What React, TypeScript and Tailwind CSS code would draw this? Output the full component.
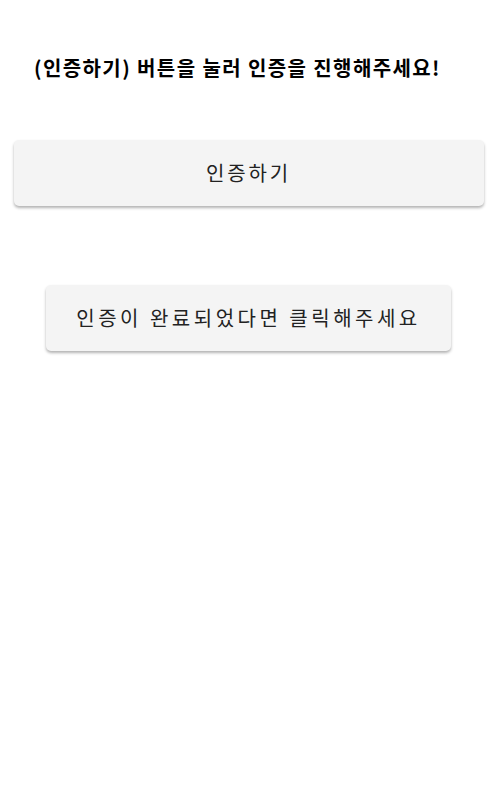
export default function App() {
  return (
    <div
      className="min-h-screen bg-white flex flex-col items-center"
      style={{ fontFamily: '"Noto Sans CJK KR", "Noto Sans", sans-serif' }}
    >
      <h1 className="self-start ml-[34px] mt-[54px] text-[20px] leading-[28px] font-bold text-black tracking-[1.4px]">
        (인증하기) 버튼을 눌러 인증을 진행해주세요!
      </h1>

      <button className="mt-[58px] w-[470px] h-[66px] rounded-[5px] bg-[#f4f4f4] text-[20px] text-[#222] tracking-[2.8px] shadow-[0_2px_3px_rgba(0,0,0,0.3)]">
        인증하기
      </button>

      <button className="mt-[79px] h-[66px] px-[30px] rounded-[5px] bg-[#f4f4f4] text-[20px] text-[#222] tracking-[3.5px] shadow-[0_2px_3px_rgba(0,0,0,0.3)]">
        인증이 완료되었다면 클릭해주세요
      </button>
    </div>
  );
}
